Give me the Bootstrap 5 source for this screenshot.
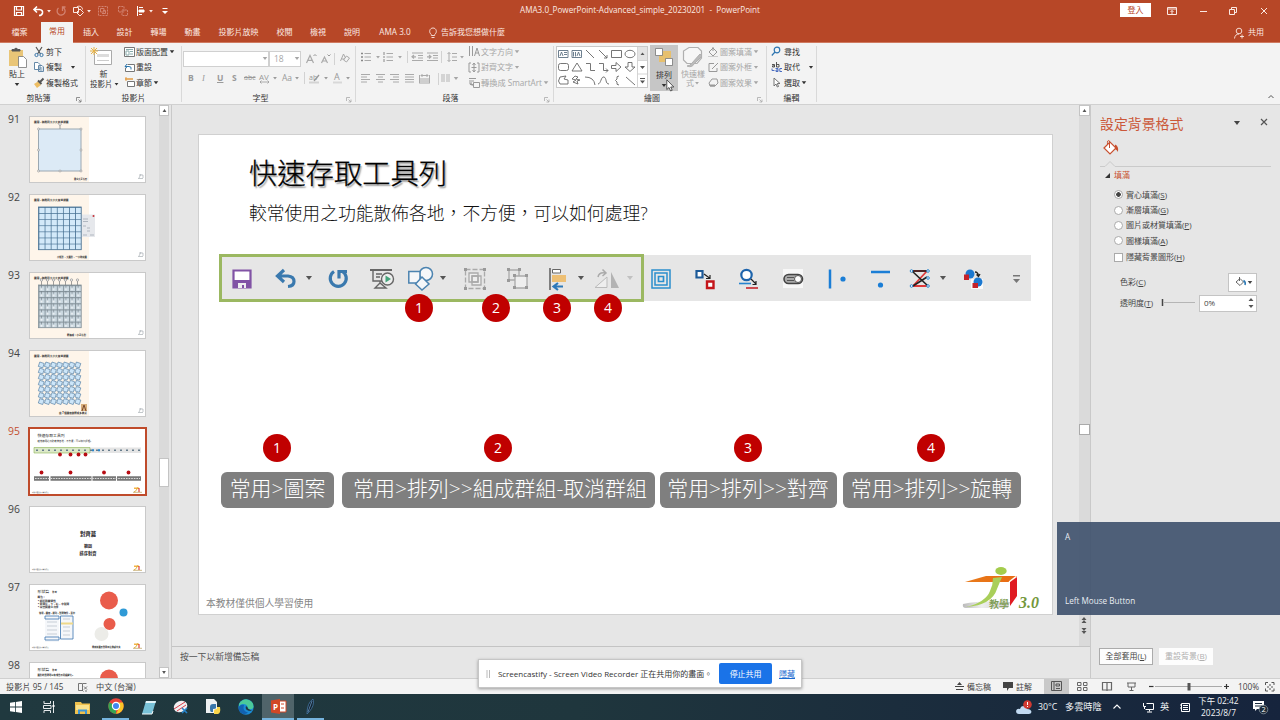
<!DOCTYPE html>
<html lang="zh-TW">
<head>
<meta charset="utf-8">
<title>AMA3.0_PowerPoint-Advanced_simple_20230201 - PowerPoint</title>
<link href="https://cdn.jsdelivr.net/npm/bootstrap@5.3.0/dist/css/bootstrap.min.css" rel="stylesheet">
<script defer src="https://cdn.jsdelivr.net/npm/bootstrap@5.3.0/dist/js/bootstrap.bundle.min.js"></script>
<style>
body{width:1280px;height:720px;overflow:hidden;background:#e6e6e6;font-family:"Open Sans","Noto Sans CJK TC",sans-serif;font-size:8px;line-height:12px;color:#333;white-space:nowrap}
svg{display:block;flex:none;overflow:visible}
svg:not([fill]){fill:none}
.strip{display:grid;align-items:center}
.dd{display:block;flex:none;width:6px;height:3px;background:currentColor;clip-path:polygon(12% 0,88% 0,50% 100%)}
.vline{width:1px;height:12px;background:#d2d2d2}
.dim{color:#a6a6a6}
/* title and tabs */
.topbar{height:43px;background:#b74727;color:#fbe9e3;border-bottom:1px solid #cf7a60}
.titlebar{height:22px}
.qat{grid-template-columns:19px 15px 8px 18px 14px 10px 20px 18px 14px 13px 8px;padding-left:12px;width:300px}
.doc-title{width:680px;text-align:center;font-size:8.15px;line-height:20px}
.wincmd{width:300px;grid-template-columns:46px 31px 30px 31px 14px;padding-left:140px}
.login{width:31px;height:14px;background:#fff;color:#b74727;text-align:center;line-height:13px;margin-bottom:2px}
.tabs{height:20px;grid-template-columns:39px 36px 32px 35px 33px 35px 57px 35px 32px 36px 48px 10px 805px 11px 30px;text-align:center;line-height:18px}
.tabs>div{margin-top:-2px}
.tabs>.tab-on{background:#f3f3f3;color:#b74727;height:21px;width:32px;margin:0 0 0 2px}
.tab-ama{font-size:8.2px;padding-left:2px}
.tell{text-align:left;padding-left:13px}
/* ribbon */
.ribbon{height:62px;background:#f3f3f3;border-bottom:1px solid #d0d0d0;padding-top:3px}
.grp{height:56px;position:relative;border-right:1px solid #d9d9d9}
.grp-body{height:45px}
.grp-name{height:13px;line-height:13px;text-align:center;color:#333}
.launch{position:absolute;right:3px;bottom:-1px}
.g1{width:86px}.g2{width:96px}.g3{width:174px}.g4{width:198px}.g5{width:213px}.g6{width:50px}
.bigb{line-height:10px;text-align:center}
.bigb .lbl{height:10px}
.stack{margin-top:-2px}
.stack>div{height:15.5px;display:flex;align-items:center}
.stack svg{margin-right:1px}
.stack .dd{margin-left:1px}
.paste{width:34px}
.paste svg{margin:2px 0 1px 8px}
.newsl{width:38px}
.newsl svg{margin-left:3px}
.newsl .lbl{padding-right:3px}
.newsl .two{font-size:7.5px;padding-left:4px;gap:1px;line-height:10px}
.combo{height:16px;background:#fff;border:1px solid #d0d0d0;line-height:14px;font-size:8.5px}
.r-font1{grid-template-columns:86px 37px 15px 13px 5px 12px;padding:3px 0 0 1px;height:22px}
.r-font2{grid-template-columns:14px 15px 15px 12px 15px 13px 10px 12px 10px 5px 14px 10px 12px 6px;padding-left:6px;height:20px;font-size:8.5px;color:#9a9a9a}
.r-p1{grid-template-columns:14px 8px 14px 10px 4px 15px 15px 6px 12px 6px;padding:0 0 0 5px;height:22px;width:116px}
.r-p2{grid-template-columns:14.5px 14.5px 14.5px 14.5px 15px 7px 12px 6px;padding-left:5px;height:21px}
.gallery{width:92px;height:42px;background:#fff;border:1px solid #c8c8c8;margin:0 2px 0 2px}
.arrbtn{width:28px;height:46px;background:#c6c6c6;margin-top:-1px;position:relative}
.pointer{position:absolute;left:16px;top:34px}
.quick{width:30px}
/* slide list */
.workarea{height:573px}
.slidelist{width:172px;height:573px;overflow:hidden;border-right:1px solid #c9c9c9}
.thumb-row{display:grid;grid-template-columns:30px 116px;height:78px;align-items:start}
.thumb-row b{font-weight:400;font-size:10.4px;padding-left:8px;line-height:5px;color:#444}
.thumb-row svg{outline:1px solid #c9c9c9;background:#fff;overflow:hidden}
.thumb-row.sel b{color:#c34f30}
.thumb-row.sel svg{outline:2px solid #bf4b2b}
.thumbs{padding-top:11.5px;width:159px}
.sbar{width:10px;background:#dadada}
.sbtn{width:10px;height:11px;background:#fff;border:1px solid #c4c4c4;display:flex;align-items:center;justify-content:center;color:#555}
.sbtn .dd{width:5px}
.flip{transform:rotate(180deg)}
.lthumb{height:29px;background:#fff;border:1px solid #c4c4c4;margin-top:342px}
/* editor */
.editor{width:918px}
.stage{height:541px}
.slide{width:855px;height:481px;margin:29px 0 0 26px;background:#fff;border:1px solid #d0d0d0;position:relative}
.s-title{font-size:28.3px;font-weight:300;line-height:38px;margin:19px 0 0 50px;color:#000;text-shadow:1.5px 1.5px 1.5px #999;-webkit-text-stroke:.3px #000}
.s-sub{font-size:17.8px;font-weight:300;line-height:30px;margin:6px 0 0 50px;color:#111}
.s-bar{margin:26px 0 0 20px;height:48px}
.s-green{width:425px;height:48px;border:3px solid #9bb861;background:#e6e6e6;grid-template-columns:44px 31px 21px 44px 38px 31px 24px 43px 40px 31px 18px 31px 8px;padding:2px 0 0 8px}
.s-gray{width:387px;height:46px;background:#e6e6e6;grid-template-columns:44px 43px 45px 44px 43px 40px 31px 22px 51px 8px;padding:2px 0 0 5px}
.s-bar .dd{width:8px;height:4px;color:#555;margin-top:-2px}
.num{width:28px;height:28px;border-radius:50%;background:#c00000;color:#fff;font-size:14px;line-height:27px;text-align:center}
.nums1{grid-template-columns:77px 61px 51px 28px;margin:-8px 0 0 206px;position:relative}
.nums2{grid-template-columns:221px 250px 183px 28px;margin:112px 0 0 64px}
.paths{margin:10px 0 0 22px;height:36px;grid-template-columns:121px 317.5px 183px 178px}
.path-box{height:36px;border-radius:6px;background:#7f7f7f;color:#fff;font-size:20.95px;font-weight:300;line-height:33px;text-align:center}
.p1{width:113px}.p2{width:313px;padding-left:3px}.p3{width:177px}.p4{width:178px}
.s-foot{font-size:9.75px;color:#858585;line-height:14px;margin:89px 0 0 7px}
.s-logo{position:absolute;right:10px;bottom:-3px}
.edbar{width:11px}
.edthumb{height:11px;background:#fff;border:1px solid #aaa;margin:308px 0 179px}
.notes{height:32px;border-top:1px solid #c4c4c4;padding:3px 0 0 8px;font-size:8.8px;line-height:14px;color:#555}
/* format pane */
.pane{width:190px;border-left:1px solid #c9c9c9;padding-left:9px;color:#444}
.pane-head{height:34px;grid-template-columns:133px 27px 10px}
.pane-head h2{font-size:13.9px;line-height:34px;margin:0;font-weight:400;color:#cb5839;padding-top:2px}
.opts{padding:6px 0 0 14px}
.opts>div{height:15.4px;display:flex;align-items:center}
.opts>div:last-child{margin-top:1px}
.opts i{width:9px;height:9px;border:1px solid #aaa;background:#fff;border-radius:50%;margin-right:3px;display:block}
.opts i.on{background:radial-gradient(#444 0 2px,#fff 2.6px)}
.opts i.sq{border-radius:0}
.sect{color:#c8502f;margin:1px 0 0 5px;gap:4px;height:12px}
.colr{padding:8px 23px 0 20px}
.colr.low{padding-top:0;margin-top:3px}
.fillbtn{width:29px;height:19px;background:#fff;border:1px solid #c4c4c4;padding:0 3px 0 6px}
.spin{width:58px;height:17px;background:#fff;border:1px solid #c4c4c4;padding:0 2px 0 4px}
.pbtns{margin:336px 0 0 -1px;gap:6px}
.pbtn{width:54px;height:17px;background:#fdfdfd;border:1px solid #ababab;text-align:center;line-height:14px}
.pbtn.off{border-color:#fdfdfd;color:#b0b0b0}
.keys{position:absolute;left:1057px;top:522px;width:223px;height:93px;background:rgba(61,80,108,.9);color:#e9edf2;padding:9px 8px 8px;font-size:8.15px}
/* bottom */
.status{height:16px;background:#f3f3f3;border-top:1px solid #cfcfcf;padding-left:6px;color:#444}
.st-l{grid-template-columns:68px 22px 60px;width:949px;line-height:13px}
.st-r{grid-template-columns:12px 36px 13px 28px 33px 25px 25px 22px 6px 69px 12px 29px 12px;width:325px;line-height:13px}
.viewon{width:25px;height:15px;background:#c9c9c9;padding:2px 0 0 7px}
.pct{font-size:8.3px;padding-left:2px}
.task{height:26px;background:linear-gradient(90deg,#20393f 0,#1f363d 45%,#1b2d3d 70%,#16243d 100%);color:#f2f4f6}
.apps{grid-template-columns:32px 34px 33px 33px 33px 32px 32px 33px 32px 32px;width:1016px;justify-items:center}
.apps>div{height:26px;width:32px;display:flex;align-items:center;justify-content:center}
.apps .run{border-bottom:2px solid #76b4de;width:27px}
.apps .cur{background:#50646a;width:32px}
.tray{grid-template-columns:22px 27px 47px 31px 17px 20px 17px 43px 29px 8px;font-size:9.2px;width:264px}
.clock{font-size:8.4px;text-align:center;line-height:12px}
.share{position:absolute;left:478px;top:659px;width:324px;height:29px;background:#fff;border:1px solid #c6c6c6;box-shadow:0 1px 3px #999;padding:0 6px 0 7px;font-size:8px}
.share .btn{width:53px;height:21px;padding:0;font-size:8px;line-height:20px;background:#1a73e8;border:0;border-radius:2px}
.share a{color:#1a6bd0;font-size:8px}
</style>
</head>
<body>
<svg width="0" height="0" class="position-absolute">
<defs>
<pattern id="cells" width="6.1" height="6.1" patternUnits="userSpaceOnUse" x="8.5" y="12"><rect width="6.1" height="6.1" fill="#d3e9f9"/><path d="M0 0H6.1M0 0V6.1" stroke="#456f92" stroke-width="1.5"/></pattern>
<pattern id="picked" width="6.1" height="6.1" patternUnits="userSpaceOnUse" x="8.500" y="12"><rect width="6.1" height="6.1" fill="#ccd9e1"/><path d="M0 .5H6.100M.5 0V6.100" stroke="#84929a"/><path d="M3 0V3" stroke="#6f7c84" stroke-width=".6"/><circle cx="3" cy="4.200" r="1" fill="#eef2f4"/></pattern>
<g id="turned" fill="#cde6f9" stroke="#41719a" stroke-width=".6"><path id="tq" d="M1.800 0L6.200 1.500L4.700 5.900L.3 4.400Z"/><use href="#tq" x="6.100"/><use href="#tq" x="12.200"/><use href="#tq" x="18.300"/><use href="#tq" x="24.400"/><use href="#tq" x="30.500"/><use href="#tq" x="36.600"/></g>
<g id="tinylogo"><path d="M1 1H5V4M0 4.500H5M3 0L1 4" stroke="#9aa2a7" stroke-width=".6"/></g>
<g id="gold"><path d="M1 1.200H6" stroke="#f0a018" stroke-width="1.200"/><path d="M6 1V5" stroke="#d91c18"/><path d="M4.500 .3Q4 4 1 5" stroke="#e2b23e"/><path d="M0 5.300H9" stroke="#b99a50" stroke-width=".7"/></g>
<g id="flower"><path d="M0 0H59V66H0Z" fill="#fef5ea"/><text x="4" y="6" font-size="2.700" font-weight="700" fill="#222">圖案 - 使用同大小大量並排圖</text></g>
</defs>
</svg>

<header class="topbar">
 <div class="titlebar d-flex">
  <div class="qat strip">
   <svg width="14" height="14" stroke="#fff" stroke-width="1.2"><path d="M2.500 2.500H11.500V11.500H2.500ZM4.500 2.500V6H9.500V2.500M4.500 11V8.500H9.500V11"/></svg>
   <svg width="14" height="14" stroke="#fff" stroke-width="1.600"><path d="M6 2.500L3 5.500L6 8.500M3.400 5.500H8.500Q12 6 11.500 9Q11 11.500 8 11.500"/></svg>
   <i class="dd"></i>
   <svg width="14" height="14" stroke="#d28270" stroke-width="1.300"><path d="M4.500 4A4 4 0 1 0 9 3.500M8.500 7V3H11.500"/></svg>
   <svg width="14" height="14" stroke="#fbe9e3"><path d="M1.500 3.500H6.500V8.500H1.500ZM4.500 3.500C5 1.500 10.500 1.500 10.500 5.500M8 5L11.500 8.500L8 12L4.500 8.500Z"/></svg>
   <i class="dd"></i>
   <svg width="14" height="14" stroke="#d28270"><path d="M2.500 2.500H11.500V11.500H2.500Z" stroke-dasharray="2 1"/><path d="M4.500 4.500H8V8H4.500ZM7 6.500H9.500V9.500H6"/></svg>
   <svg width="14" height="14" stroke="#d28270"><path d="M2.500 2.500H8V8H2.500ZM6 6H11.500V11.500H6Z" stroke-dasharray="2 .8"/></svg>
   <svg width="14" height="14" stroke="#fff"><path d="M3.500 2V12M5 3.500H9"/><path d="M5 6H10V8H5Z" fill="#fff"/><path d="M5 10.500H8"/></svg>
   <i class="dd"></i>
   <svg width="8" height="8" fill="#fff"><path d="M1.500 1H6.500V2H1.500ZM1 4H7L4 7Z"/></svg>
  </div>
  <div class="doc-title">AMA3.0_PowerPoint-Advanced_simple_20230201&nbsp; -&nbsp; PowerPoint</div>
  <div class="wincmd strip">
   <div class="login">登入</div>
   <svg width="12" height="10" stroke="#fbe9e3"><path d="M1.500 1.500H10.500V8.500H1.500ZM1.500 3H10.500M6 8V4.500M4.500 6L6 4.500L7.500 6"/></svg>
   <svg width="12" height="10" stroke="#fbe9e3"><path d="M3 5.500H10"/></svg>
   <svg width="12" height="10" stroke="#fbe9e3"><path d="M2.500 3.500H7.500V8.500H2.500ZM4.500 3.500V1.500H9.500V6.500H7.500"/></svg>
   <svg width="12" height="10" stroke="#fbe9e3"><path d="M3 2L9 8M9 2L3 8"/></svg>
  </div>
 </div>
 <nav class="tabs strip">
  <div>檔案</div><div class="tab-on">常用</div><div>插入</div><div>設計</div><div>轉場</div><div>動畫</div><div>投影片放映</div><div>校閱</div><div>檢視</div><div>說明</div><div class="tab-ama">AMA 3.0</div>
  <svg class="ms-2" width="10" height="12" stroke="#fbe9e3" stroke-width=".9"><path d="M5.300 8.500V7.500C2.500 5.500 3.500 1 7 1S11.500 5.500 8.700 7.500V8.500ZM5.500 10.500H8.500"/></svg>
  <div class="tell">告訴我您想做什麼</div>
  <svg width="12" height="12" stroke="#fbe9e3" stroke-width=".9"><circle cx="6" cy="4" r="2.800"/><path d="M1.500 11.500Q2 7 6 7M7 9.500H11M9 7.500V11.500"/></svg>
  <div class="text-start ps-1">共用</div>
 </nav>
</header>

<section class="ribbon d-flex">
 <div class="grp g1">
  <div class="grp-body d-flex">
   <div class="paste bigb">
    <svg width="20" height="20"><path d="M1 2H15V18H1Z" fill="#e9c577"/><path d="M4 3H12V1.500H10L8 0L6 1.500H4Z" fill="#555" stroke="#555"/><path d="M10.500 8.500H15.500L18.500 11.500V19.500H10.500Z" fill="#fff" stroke="#777" stroke-width=".8"/></svg>
    <div class="lbl">貼上</div><i class="dd mx-auto mt-1"></i>
   </div>
   <div class="stack">
    <div><svg width="11" height="12"><path d="M2 1L6.500 8M8 1L3.500 8" stroke="#555" stroke-width="1.200"/><circle cx="2.500" cy="9" r="1.600" stroke="#3a75a8"/><circle cx="7.500" cy="9" r="1.600" stroke="#3a75a8"/></svg>剪下</div>
    <div><svg width="11" height="12" stroke="#6589a8" fill="#fff"><path d="M.5 1.500H4L6 3.500V8.500H.5ZM4.500 4.500H8L9.500 6V10.500H4.500Z"/><path d="M5.500 7H8.500M5.500 9H8.500"/></svg>複製<i class="dd ms-2"></i></div>
    <div><svg width="11" height="12"><path d="M0 7L4 4.500L7 8L3 11Z" fill="#edbd62"/><path d="M4 3.500L7.500 7M6 5L9.500 1.500" stroke="#555" stroke-width="2"/></svg>複製格式</div>
   </div>
  </div>
  <div class="grp-name pe-2">剪貼簿</div>
  <svg class="launch" width="6" height="6" stroke="#777" stroke-width=".8"><path d="M.5 4V.5H4M2.500 2.500L5 5M5 2.500V5H2.500"/></svg>
 </div>
 <div class="grp g2">
  <div class="grp-body d-flex">
   <div class="newsl bigb">
    <svg width="24" height="23"><path d="M5.500 4.500H22.500V18.500H5.500Z" fill="#fff" stroke="#aaa"/><path d="M8 8H20V11H8Z" fill="#dcdcdc"/><path d="M8 14.500H20" stroke="#ccc"/><path d="M5 1V9M1 5H9M2 2L8 8M8 2L2 8" stroke="#e8b346"/></svg>
    <div class="lbl">新</div><div class="d-flex align-items-center two">投影片<i class="dd"></i></div>
   </div>
   <div class="stack">
    <div><svg width="11" height="10" stroke="#777" fill="#fff"><path d="M.5 .5H10.500V9.500H.5Z"/><path d="M2 2.500H9M2 4V8H5V4ZM6 4.500H9M6 7H9" stroke="#8aa"/></svg>版面配置<i class="dd"></i></div>
    <div><svg width="11" height="11" stroke="#777"><path d="M3.500 2.500H10.500V9.500H1.500V6" fill="#fff"/><path d="M1 4.500H5Q8 4.500 7 7.500M3 2L1 4.500L3 6" stroke="#2e77ad"/></svg>重設</div>
    <div><svg width="11" height="11"><path d="M1 2H9" stroke="#e39b42" stroke-width="1.500"/><path d="M3.500 4.500H10.500V9.500H3.500Z" fill="#fff" stroke="#777"/><path d="M2 0V4" stroke="#e39b42"/></svg>章節<i class="dd"></i></div>
   </div>
  </div>
  <div class="grp-name">投影片</div>
 </div>
 <div class="grp g3 dim">
  <div class="grp-body">
   <div class="r-font1 strip">
    <div class="combo d-flex align-items-center justify-content-end pe-0"><i class="dd"></i></div>
    <div class="combo d-flex align-items-center justify-content-between ps-1" style="width:32px">18<i class="dd"></i></div>
    <svg width="11" height="11"><path d="M.5 10L4 2.500L7.500 10M1.800 7.300H6.200" stroke="#aaa" stroke-width="1.200"/><path d="M7.500 3L9 1.500L10.500 3" stroke="#999"/></svg>
    <svg width="9" height="11"><path d="M.5 10L3.500 4L6.500 10M1.500 8H5.500" stroke="#aaa" stroke-width="1.200"/><path d="M6.500 1.500L8 3L9.500 1.500" stroke="#999"/></svg>
    <span class="vline"></span>
    <svg width="12" height="12" stroke="#aaa"><path d="M1.500 8L4.500 1L6.500 5M2.500 6H5.500M4.500 7L7.500 3L10.500 5L7.500 9Z"/></svg>
   </div>
   <div class="r-font2 strip">
    <b>B</b><i style="font-family:'Liberation Serif'">I</i><u><b>U</b></u><b>S</b><s style="font-size:7px">abc</s>
    <svg width="11" height="11"><text x="0" y="6.500" font-size="8" fill="#999">AV</text><path d="M1 9H10M2.500 7.500L1 9L2.500 10.500M8.500 7.500L10 9L8.500 10.500" stroke="#999" stroke-width=".8"/></svg>
    <i class="dd"></i><span>Aa</span><i class="dd"></i><span class="vline"></span>
    <svg width="11" height="11"><text x="0" y="6.500" font-size="7" fill="#999">ab</text><path d="M5 8L10 2" stroke="#999" stroke-width="1.300"/><path d="M0 9.500H10" stroke="#d3d3d3" stroke-width="2"/></svg>
    <i class="dd"></i>
    <svg width="10" height="11"><text x="1" y="7" font-size="9" fill="#999">A</text><path d="M0 9.500H9" stroke="#d8d8d8" stroke-width="2"/></svg>
    <i class="dd"></i>
   </div>
  </div>
  <div class="grp-name pe-3">字型</div>
  <svg class="launch" width="6" height="6" stroke="#aaa" stroke-width=".8"><path d="M.5 4V.5H4M2.500 2.500L5 5M5 2.500V5H2.500"/></svg>
 </div>
 <div class="grp g4 dim">
  <div class="grp-body d-flex">
   <div>
    <div class="r-p1 strip">
     <svg width="10" height="10" stroke="#aaa"><path d="M3.500 1.500H10M3.500 5H10M3.500 8.500H10"/><path d="M0 1.500H2M0 5H2M0 8.500H2" stroke="#888" stroke-width="1.600"/></svg><i class="dd"></i>
     <svg width="10" height="10" stroke="#aaa"><path d="M3.500 1.500H10M3.500 5H10M3.500 8.500H10"/><path d="M1 0V3M1 4V6M1 7V10" stroke="#888"/></svg><i class="dd"></i><span class="vline"></span>
     <svg width="12" height="10" stroke="#aaa"><path d="M1 1H12M7 3.500H12M7 6H12M1 8.500H12M5 4.800H1M3 3L1 4.800L3 6.500" stroke-width="1.200"/></svg>
     <svg width="12" height="10" stroke="#aaa"><path d="M1 1H12M7 3.500H12M7 6H12M1 8.500H12M1 4.800H5M3 3L5 4.800L3 6.500" stroke-width="1.200"/></svg><span class="vline"></span>
     <svg width="10" height="10" stroke="#aaa"><path d="M5 1.500H10M5 5H10M5 8.500H10M2 .5V9.500M.5 2L2 .5L3.500 2M.5 8L2 9.500L3.500 8"/></svg><i class="dd"></i>
    </div>
    <div class="r-p2 strip">
     <svg width="10" height="9" stroke="#aaa"><path d="M0 .5H9M0 3H6M0 5.500H9M0 8H6"/></svg>
     <svg width="10" height="9" stroke="#aaa"><path d="M0 .5H9M2 3H7M0 5.500H9M2 8H7"/></svg>
     <svg width="10" height="9" stroke="#aaa"><path d="M0 .5H9M3 3H9M0 5.500H9M3 8H9"/></svg>
     <svg width="10" height="9" stroke="#aaa"><path d="M0 .5H9M0 3H9M0 5.500H9M0 8H9"/></svg>
     <svg width="11" height="11" stroke="#aaa"><path d="M.5 2V10.500M10.500 2V10.500M1 6H10M1 8H10M1 10H10M2 2.500H9M3.500 1L2 2.500L3.500 4M7.500 1L9 2.500L7.500 4"/></svg>
     <span class="vline ms-1"></span>
     <svg width="9" height="9" stroke="#b5b5b5"><path d="M0 1H4M0 3H4M0 5H4M0 7H4M5 1H9M5 3H9M5 5H9M5 7H9"/></svg><i class="dd"></i>
    </div>
   </div>
   <div class="stack" style="margin-left:-4px">
    <div><svg width="12" height="11" stroke="#999"><path d="M1.500 0V10M4.500 0V10"/><path d="M6.500 10L9 2L11.500 10M7.500 7H10.500"/></svg>文字方向<i class="dd"></i></div>
    <div><svg width="12" height="11" stroke="#999"><path d="M3 1H1V10H3M9 1H11V10H9M6 1V10M4.500 3L6 1L7.500 3M4.500 8L6 10L7.500 8M3.500 5.500H8.500"/></svg>對齊文字<i class="dd"></i></div>
    <div style="font-size:8.2px"><svg width="12" height="11" stroke="#999"><path d="M1 1.500H8M1 4H6M1 6H4M5.500 5.500H11.500V10.500H5.500Z"/><path d="M2 7L5 8" stroke-width="1.500"/></svg>轉換成 SmartArt<i class="dd"></i></div>
   </div>
  </div>
  <div class="grp-name pe-2">段落</div>
  <svg class="launch" width="6" height="6" stroke="#aaa" stroke-width=".8"><path d="M.5 4V.5H4M2.500 2.500L5 5M5 2.500V5H2.500"/></svg>
 </div>
 <div class="grp g5">
  <div class="grp-body d-flex">
   <div class="gallery">
    <svg width="90" height="40" stroke="#666" stroke-width=".9">
     <path d="M1.500 3.500H11V10.500H1.500ZM7 5.500H10M7 7.500H10M3 9L4.500 5L6 9M15 3.500H24.500V10.500H15ZM16.500 5V9.500M18.500 5V9.500M20 9L21.500 5L23 9" stroke="#5d7283"/>
     <path d="M29 3L37 11M42 3L50 11M50 8V11H47M54.500 3.500H64.500V10.500H54.500Z"/><ellipse cx="73" cy="7" rx="5" ry="3.700"/>
     <rect x="1.500" y="16.500" width="10" height="7" rx="2"/><path d="M20 16L25 24H15ZM29 16.500H33.500V23.500H38M42 16.500H46.500V23.500H51M49 21.500L51 23.500L49 25.500M54.500 18.500H59V15.500L64 20L59 24.500V21.500H54.500ZM71 15.500H75V20H78L73 24.500L68 20H71Z"/>
     <path d="M3 37H11L11 33L7 32L9 29L3 30L1.500 34ZM18 29L15 32L19 33L16 35L21 37L20 34L23 33L19 32L21 30ZM28 30Q37 30 38 38M41 37C44 37 44 29 47 30S48 37 52 37M62 29Q59 29 60 32L58.500 33.500L60 35Q59 38 62 38M69 30L78 38"/>
     <path d="M80.500 0V40M80.500 13.500H90M80.500 27H90" stroke="#d0d0d0"/><rect x="81" y="0" width="9" height="13" fill="#e3e3e3" stroke="none"/>
     <path d="M83.500 8L85.500 5.500L87.500 8ZM83 19H88L85.500 22ZM83 33.500H88L85.500 36.500ZM83 31H88V32H83Z" fill="#555" stroke="none"/>
    </svg>
   </div>
   <div class="arrbtn bigb">
    <svg width="20" height="20" class="ms-1" style="margin-bottom:5px"><path d="M5 8H14V17H5ZM9 6H17V13H9Z" fill="#e7c06e"/><path d="M1.500 3.500H8.500V10.500H1.500ZM11.500 13.500H18.500V20.500H11.500Z" fill="#fff" stroke="#777" stroke-width=".8"/></svg>
    <div class="lbl">排列</div><i class="dd mx-auto mt-1"></i>
    <svg class="pointer" width="9" height="13"><path d="M.8 .8V10.500L3 8.500L4.600 12L6.200 11.300L4.700 8H7.800Z" fill="#fff" stroke="#333" stroke-width=".8"/></svg>
   </div>
   <div class="quick bigb dim">
    <svg width="22" height="23" class="ms-1" stroke="#b0b0b0"><path d="M7 1.500H16L19.500 5V12L15 17.500H5L1.500 14V5Z" stroke-width="1.200" fill="#f7f7f7"/><path d="M18 8L10 17Q8 20 5 20Q10 22 12 18L20 10Z" fill="#bbb"/></svg>
    <div class="lbl">快速樣</div><div class="d-flex justify-content-center align-items-center lh-1">式<i class="dd"></i></div>
   </div>
   <div class="stack dim">
    <div><svg width="11" height="11" stroke="#999"><path d="M1 6L5 2L9 6L5 10ZM5 5V1"/><path d="M0 10.500H10" stroke="#ccc"/></svg>圖案填滿<i class="dd"></i></div>
    <div><svg width="11" height="11" stroke="#999"><path d="M9 6V9.500H1V1.500H6M4 7L10 1"/></svg>圖案外框<i class="dd"></i></div>
    <div><svg width="11" height="11" stroke="#999"><path d="M4 2H9L10 6L7 9H2L1 6Z"/><path d="M2 8.500H7" stroke-width="2"/></svg>圖案效果<i class="dd"></i></div>
   </div>
  </div>
  <div class="grp-name pe-3">繪圖</div>
  <svg class="launch" width="6" height="6" stroke="#aaa" stroke-width=".8"><path d="M.5 4V.5H4M2.500 2.500L5 5M5 2.500V5H2.500"/></svg>
 </div>
 <div class="grp g6">
  <div class="grp-body d-flex">
   <div class="stack ps-1">
    <div><svg width="12" height="11" stroke="#2e75b0" stroke-width="1.200"><circle cx="6" cy="4" r="2.800"/><path d="M4 6L.8 9.500"/></svg>尋找</div>
    <div><svg width="12" height="11" stroke="#444" stroke-width=".9"><path d="M1 2.500H3.500V5H1.500V3.800H3.500M5.500 0V5H8V2.500H5.500"/><path d="M4.500 6.500H7V9.500H5V8H7M11 6.500H8.800V9.500H11M1 6.500V8.500H3.500" stroke="#3a60bb"/></svg>取代<i class="dd ms-2"></i></div>
    <div><svg width="12" height="11" stroke="#666" stroke-width=".9"><path d="M3 1V9L5 7L6.300 10L7.500 9.500L6.300 6.500H9Z" fill="#fff"/></svg>選取<i class="dd"></i></div>
   </div>
  </div>
  <div class="grp-name">編輯</div>
 </div>
 <svg class="ms-auto align-self-end me-1 mb-1" width="9" height="6" stroke="#555"><path d="M1.500 4L4 1.500L6.500 4"/></svg>
</section>

<main class="workarea d-flex">
 <aside class="slidelist d-flex">
  <div class="thumbs">
   <div class="thumb-row"><b>91</b><svg width="115" height="65"><use href="#flower"/><path d="M8.500 12H51V54H8.500Z" fill="#dceaf6" stroke="#9ba8b2"/><path d="M30 12V7" stroke="#888" stroke-width=".8"/><g fill="#fff" stroke="#888" stroke-width=".6"><circle cx="30" cy="7" r="1.300"/><circle cx="8.500" cy="12" r="1"/><circle cx="51" cy="12" r="1"/><circle cx="8.500" cy="54" r="1"/><circle cx="51" cy="54" r="1"/><circle cx="30" cy="54" r="1"/><circle cx="8.500" cy="33" r="1"/><circle cx="51" cy="33" r="1"/></g><text x="44" y="62.500" font-size="2.200" fill="#222" font-weight="700">建立大正方形</text><use href="#tinylogo" x="108" y="57"/></svg></div>
   <div class="thumb-row"><b>92</b><svg width="115" height="65"><use href="#flower"/><rect x="8.500" y="12" width="42.700" height="42.700" fill="url(#cells)" stroke="#456f92" stroke-width=".8"/><path d="M52 19.500H65V42H52Z" fill="#e6e8ec"/><circle cx="63.500" cy="21" r="1" fill="#c8333a"/><path d="M53 24H58M53 26.500H58M53 31H56M57 33H60M57 36H60M53 40H57M60 40H64" stroke="#a2aab5" stroke-width=".8"/><text x="27" y="62.500" font-size="2.300" fill="#222" font-weight="700">小矩形、大圖形、一小時完圖</text><use href="#tinylogo" x="108" y="57"/></svg></div>
   <div class="thumb-row"><b>93</b><svg width="115" height="65"><use href="#flower"/><rect x="8.500" y="12" width="42.700" height="42.700" fill="url(#picked)" stroke="#84929a" stroke-width=".8"/><path d="M11.500 12V7.500M17.500 12V7.500M23.500 12V7.500M29.500 12V7.500M35.500 12V7.500M41.500 12V7.500M47.500 12V7.500" stroke="#888" stroke-width=".8"/><g fill="#eee" stroke="#888" stroke-width=".6"><circle cx="11.500" cy="7" r="1.200"/><circle cx="17.500" cy="7" r="1.200"/><circle cx="23.500" cy="7" r="1.200"/><circle cx="29.500" cy="7" r="1.200"/><circle cx="35.500" cy="7" r="1.200"/><circle cx="41.500" cy="7" r="1.200"/><circle cx="47.500" cy="7" r="1.200"/></g><text x="37" y="62.500" font-size="2.400" fill="#222" font-weight="700">轉換成：小正方形</text><use href="#tinylogo" x="108" y="57"/></svg></div>
   <div class="thumb-row"><b>94</b><svg width="115" height="65"><use href="#flower"/><use href="#turned" x="8" y="11"/><use href="#turned" x="8" y="17.100"/><use href="#turned" x="8" y="23.200"/><use href="#turned" x="8" y="29.300"/><use href="#turned" x="8" y="35.400"/><use href="#turned" x="8" y="41.500"/><use href="#turned" x="8" y="47.600"/><path d="M51 53H57V60H51Z" fill="#d8ae7a"/><path d="M52 60L54 54L56 60" stroke="#7a4a30"/><text x="29" y="62.500" font-size="2.500" fill="#222" font-weight="700">由 7 個圖案旋轉成多樣式</text><use href="#tinylogo" x="108" y="57"/></svg></div>
   <div class="thumb-row sel"><b>95</b><svg width="115" height="65"><text x="7.500" y="8" font-size="3.900" fill="#222">快速存取工具列</text><text x="7.500" y="12.800" font-size="2.400" fill="#222">較常使用之功能散佈各地，不方便，可以如何處理?</text><path d="M4 18.500H111V24H4Z" fill="#e4e4e4"/><path d="M4 18.500H60V24H4Z" fill="#dbe8c8" stroke="#8fb755" stroke-width=".6"/><path d="M6 21.300H110" stroke="#667c8c" stroke-width="1.400" stroke-dasharray="2 4"/><path d="M62 21.300H64M68 21.300H70" stroke="#2a86c8" stroke-width="2"/><g fill="#b80d14"><circle cx="30" cy="25.500" r="1.900"/><circle cx="40.500" cy="25.500" r="1.900"/><circle cx="48.500" cy="25.500" r="1.900"/><circle cx="55.500" cy="25.500" r="1.900"/><circle cx="11.500" cy="43.500" r="1.900"/><circle cx="40.500" cy="43.500" r="1.900"/><circle cx="74" cy="43.500" r="1.900"/><circle cx="98.500" cy="43.500" r="1.900"/></g><path d="M4 49.500H19M20.500 49.500H61.500M62.500 49.500H86M87 49.500H111" stroke="#777" stroke-width="4.500"/><path d="M5 49.500H110" stroke="#ddd" stroke-width="1.200" stroke-dasharray="1.600 1"/><text x="2" y="64" font-size="1.500" fill="#444">本教材僅供個人學習使用</text><use href="#gold" x="103" y="58"/></svg></div>
   <div class="thumb-row"><b>96</b><svg width="115" height="65"><text x="58" y="28.500" font-size="5.400" font-weight="700" fill="#222" text-anchor="middle">對齊篇</text><text x="58" y="40.500" font-size="4" font-weight="700" fill="#222" text-anchor="middle">範圍</text><text x="58" y="47.500" font-size="4.200" font-weight="700" fill="#222" text-anchor="middle">排序對齊</text><text x="2" y="63" font-size="1.500" fill="#444">本教材僅供個人學習使用</text><use href="#gold" x="103" y="58"/></svg></div>
   <div class="thumb-row"><b>97</b><svg width="115" height="65"><text x="7.500" y="7.500" font-size="3.900" fill="#222">形狀篇</text><text x="22" y="7.500" font-size="2.600" fill="#222">參考</text><text font-size="2.700" fill="#222" font-weight="700"><tspan x="7.500" y="13">概念：</tspan><tspan x="8" y="16.500">• 相近與關係性</tspan><tspan x="8" y="19.500">• 對齊左、下、右、中對齊</tspan><tspan x="8" y="22.500">• 以空間建立次序</tspan></text><text x="9" y="28.500" font-size="2.300" fill="#222" font-weight="700">常用 / 圖案 / 排列 / 對齊物件 / 置中</text><path d="M15 31H29V57H15ZM30.500 31H43V54H30.500Z" fill="#f5f7fa"/><path d="M15 31H29V34H15ZM15 52H29V55H15ZM30.500 31H43V54H30.500Z" stroke="#3a75b0" stroke-width=".8"/><path d="M31 38.500H43" stroke="#eed98a" stroke-width="2"/><path d="M17 37H27M17 41H27M17 45H27M17 49H27M33 34H40M33 42H40M33 46H40M33 50H40" stroke="#b5bcc5" stroke-width=".7"/><circle cx="79" cy="15.500" r="9" fill="#e95c4b"/><circle cx="93.500" cy="27.500" r="4" fill="#2f9ad6"/><circle cx="79.500" cy="39" r="6" fill="#e95c4b"/><circle cx="71.500" cy="49" r="7" fill="#ecece8"/><text x="62" y="63" font-size="2.200" fill="#222" font-weight="700">將所有圖形對齊到左側或中央</text><text x="2" y="63" font-size="1.500" fill="#444">本教材僅供個人學習使用</text><use href="#gold" x="103" y="58"/></svg></div>
   <div class="thumb-row"><b>98</b><svg width="115" height="65"><text x="7.500" y="7.500" font-size="3.900" fill="#222">形狀篇</text><text x="22" y="7.500" font-size="2.600" fill="#222">參考</text><text x="7.500" y="12.500" font-size="2.300" fill="#222" font-weight="700">圖形的對齊可以有哪些不同種變化?</text><circle cx="79" cy="15.500" r="9" fill="#e95c4b"/></svg></div>
  </div>
  <div class="sbar d-flex flex-column">
   <div class="sbtn"><i class="dd flip"></i></div>
   <div class="lthumb"></div>
   <div class="sbtn mt-auto"><i class="dd"></i></div>
  </div>
 </aside>
 <section class="editor">
  <div class="stage d-flex justify-content-between">
   <article class="slide">
    <h1 class="s-title">快速存取工具列</h1>
    <p class="s-sub mb-0">較常使用之功能散佈各地，不方便，可以如何處理?</p>
    <div class="s-bar d-flex align-items-center">
     <div class="s-green strip">
      <svg width="24" height="24"><path d="M3.500 3.500H20.500V20.500H3.500Z" fill="#fff" stroke="#8153a5" stroke-width="2.200"/><path d="M4 13H20V21H4Z" fill="#8153a5"/><path d="M8 16H16V21H14V18H12V21H8Z" fill="#eee"/></svg>
      <svg width="24" height="24" stroke="#3a79ae" stroke-width="3.200"><path d="M10 3L3.500 9L10 15M4 9H14Q20 9.500 20 14.500Q20 19 14 19.500"/></svg>
      <i class="dd"></i>
      <svg width="24" height="24" stroke="#3a79ae" stroke-width="3.200"><path d="M8 4.500A8 8 0 1 0 16.500 4.500M13 11.500V4.500H21"/></svg>
      <svg width="25" height="24" stroke="#666" stroke-width="1.400"><path d="M0 3H22" stroke-width="2"/><path d="M3 3V14H13M6 7H12M6 10H10M10 14V17M10 16L5 21H16Z"/><circle cx="17.500" cy="12" r="6" fill="#eee"/><path d="M15.500 8.500L21 12L15.500 15.500Z" fill="#45a37b" stroke="none"/></svg>
      <svg width="25" height="25" fill="#f5f7f9" stroke="#4b83b0" stroke-width="1.500"><circle cx="18" cy="7" r="6.500"/><path d="M.8 4.500H12V16H.8Z"/><path d="M14 10L21 17L14 23L7.500 17Z"/></svg>
      <i class="dd"></i>
      <svg width="24" height="24" stroke="#aaa" stroke-width="1.300"><path d="M2.500 2.500H21.500V21.500H2.500Z" stroke-dasharray="5 2"/><path d="M6 6H15V15H6ZM9 9H18V18H9Z" fill="#eee"/><path d="M9 9H15V15H9Z"/><path d="M1 1H4V4H1ZM20 1H23V4H20ZM1 20H4V23H1ZM20 20H23V23H20Z" fill="#999" stroke="none"/></svg>
      <svg width="24" height="24" stroke="#aaa" stroke-width="1.300"><path d="M3 3H13V13H3Z"/><path d="M9 9H21V21H9Z" fill="#eee"/><path d="M1 1H4V4H1ZM12 1H15V4H12ZM1 12H4V15H1ZM7 7H10V10H7ZM19 7H22V10H19ZM7 19H10V22H7ZM19 19H22V22H19Z" fill="#999" stroke="none"/></svg>
      <svg width="22" height="24"><path d="M4 1V23" stroke="#666" stroke-width="1.600"/><path d="M6.500 2.500H14.500V6H6.500Z" fill="#fff" stroke="#666"/><path d="M6 8H20V15H6Z" fill="#edbf74"/><path d="M17 19.500H8M12 16L7.500 19.500L12 23" stroke="#2d78b8" stroke-width="2.200"/></svg>
      <i class="dd"></i>
      <svg width="25" height="24"><path d="M0 20.500H12V10Z" fill="#eee" stroke="#bbb"/><path d="M16 5V21H24Z" fill="#b3b3b3"/><path d="M3 10Q4 5 10 6M7.500 2.500L11 6L7.500 9" stroke="#aaa" stroke-width="1.500"/></svg>
      <i class="dd opacity-25"></i>
     </div>
     <div class="s-gray strip">
      <svg width="24" height="24" stroke="#2b8fcd" stroke-width="1.500"><path d="M3 3H21V21H3ZM6 6H18V18H6Z"/><path d="M9.500 9.500H14.500V14.500H9.500Z" stroke-width="1.700"/></svg>
      <svg width="24" height="24"><path d="M3.500 4H9.500V10.500H3.500Z" fill="#fff" stroke="#1d5a98" stroke-width="2.200"/><path d="M14 14.500H20.500V21H14Z" fill="#fff" stroke="#c4151a" stroke-width="2.400"/><path d="M11 7L16.500 11M17 8V11.500H13" stroke="#222" stroke-width="1.200"/></svg>
      <svg width="24" height="24"><circle cx="10.500" cy="8" r="5.200" fill="#fff" stroke="#1d64ac" stroke-width="2.200"/><path d="M3 16.500H15" stroke="#2683ce" stroke-width="1.600"/><path d="M10 21H22" stroke="#c8252b" stroke-width="1.600"/><path d="M15 12L20 17M20 14V17.500H16.500" stroke="#222" stroke-width="1.200"/></svg>
      <svg width="24" height="24"><path d="M2 2H22V21H2Z" fill="#f7f7f7"/><rect x="3" y="7.500" width="18.500" height="9" rx="4.500" fill="#aaa" stroke="#444" stroke-width="1.600"/><circle cx="17" cy="12" r="3.500" fill="#fff" stroke="#555"/><path d="M6 10.500H13M6 13.500H13" stroke="#555"/></svg>
      <svg width="24" height="24"><path d="M5 2.500V21.500" stroke="#1b7ed6" stroke-width="2.500"/><circle cx="18" cy="12" r="2.600" fill="#1b7ed6"/></svg>
      <svg width="24" height="24"><path d="M3 5H22" stroke="#1b7ed6" stroke-width="2.500"/><circle cx="12.500" cy="18" r="2.600" fill="#1b7ed6"/></svg>
      <svg width="24" height="24"><path d="M4 4H19L5 19H20" stroke="#e03a3a" stroke-width="1.800"/><path d="M4 4L20 19M4 4H19M5 19L19 10" stroke="#222" stroke-width="1.600"/><g fill="#fff" stroke="#2b86cc"><circle cx="3.500" cy="4" r="1.300"/><circle cx="20" cy="4" r="1.300"/><circle cx="20" cy="11" r="1.300"/><circle cx="3.500" cy="19" r="1.300"/><circle cx="20" cy="19" r="1.300"/></g></svg>
      <i class="dd"></i>
      <svg width="24" height="24"><path d="M10 12H22V22H10Z" fill="#fafafa"/><circle cx="9" cy="7" r="4.500" fill="#1b78d0"/><path d="M3 7.500H8V13H3Z" fill="#c4222a"/><circle cx="17" cy="15" r="4.500" fill="#1b78d0"/><path d="M11.500 16H17V21H11.500Z" fill="#c4222a"/><path d="M14 5Q17 5 17.500 9M15.500 7.500L17.500 9.500L19 7" stroke="#222" stroke-width="1.300"/></svg>
      <svg width="8" height="8" fill="#777"><path d="M1 0H8V1.500H1ZM1 4H8L4.500 8Z"/></svg>
     </div>
    </div>
    <div class="strip nums1"><div class="num">1</div><div class="num">2</div><div class="num">3</div><div class="num">4</div></div>
    <div class="strip nums2"><div class="num">1</div><div class="num">2</div><div class="num">3</div><div class="num">4</div></div>
    <div class="strip paths"><div class="path-box p1">常用&gt;圖案</div><div class="path-box p2">常用&gt;排列&gt;&gt;組成群組-取消群組</div><div class="path-box p3">常用&gt;排列&gt;&gt;對齊</div><div class="path-box p4">常用&gt;排列&gt;&gt;旋轉</div></div>
    <div class="s-foot">本教材僅供個人學習使用</div>
    <svg class="s-logo" width="80" height="54">
     <defs><linearGradient id="gr"><stop offset="0" stop-color="#bbb"/><stop offset=".4" stop-color="#eee"/><stop offset="1" stop-color="#ccc"/></linearGradient><linearGradient id="or"><stop offset="0" stop-color="#e87b1b"/><stop offset="1" stop-color="#e96a12"/></linearGradient></defs>
     <path d="M1 41Q20 37 48 39L46 45H4Q0 45 1 41Z" fill="url(#gr)"/>
     <path d="M3 19L24 13H55L49 19Z" fill="url(#or)"/><path d="M48 19L55 14V33L48 43Z" fill="#e01b22"/><path d="M47 19L54 13.500" stroke="#fff" stroke-width="1.300"/>
     <ellipse cx="39" cy="8" rx="5.700" ry="3.900" fill="#a4cc4c"/>
     <path d="M31 15L40 14Q37 21 35 26Q30 42 4 44Q24 39 28 28Q31 22 31 15Z" fill="#a9cf5a"/>
     <text x="27" y="44.500" font-size="10" font-weight="500" fill="#7c9c50">教學</text>
     <text x="57" y="45" font-size="17" font-style="italic" font-weight="700" fill="#74983b" style="font-family:'Liberation Serif'" textLength="20" lengthAdjust="spacingAndGlyphs">3.0</text>
    </svg>
   </article>
   <div class="edbar sbar">
    <div class="sbtn w-100"><i class="dd flip"></i></div>
    <div class="edthumb"></div>
    <svg width="10" height="22" fill="#555"><path d="M2.500 6L5 3L7.500 6ZM2.500 9L5 6L7.500 9ZM2.500 14H7.500L5 17ZM2.500 17H7.500L5 20Z"/></svg>
   </div>
  </div>
  <div class="notes">按一下以新增備忘稿</div>
 </section>
 <aside class="pane">
  <div class="pane-head strip"><h2>設定背景格式</h2><i class="dd" style="width:8px;height:4px"></i><svg width="8" height="8" stroke="#555" stroke-width="1.200"><path d="M1 0L7 6M7 0L1 6"/></svg></div>
  <svg width="172" height="29"><path d="M4 9L10 3L16 9L10 15Z" fill="#fff" stroke="#c8502f" stroke-width="1.200"/><path d="M9.500 9V2Q7 0 7.500 6" stroke="#c8502f"/><path d="M15 5.500Q19 7 18 13Q17 11 15 10Z" fill="#c8502f"/><path d="M0 27.500H5L10 22.500L15 27.500H171" stroke="#cacaca"/></svg>
  <div class="sect d-flex align-items-center"><svg width="5" height="5"><path d="M5 0V5H0Z" fill="#333"/></svg>填滿</div>
  <div class="opts">
   <div><i class="on"></i>實心填滿(<u>S</u>)</div><div><i></i>漸層填滿(<u>G</u>)</div><div><i></i>圖片或材質填滿(<u>P</u>)</div><div><i></i>圖樣填滿(<u>A</u>)</div><div><i class="sq"></i>隱藏背景圖形(<u>H</u>)</div>
  </div>
  <div class="colr d-flex align-items-center justify-content-between"><span>色彩(<u>C</u>)</span><div class="fillbtn d-flex align-items-center justify-content-between"><svg width="11" height="10" stroke="#555" stroke-width=".9"><path d="M1 5L5 1.500L8.500 5L5 8.500ZM4.500 4V0"/><path d="M8.500 3.500Q11 5 10 8" stroke="#2a78b5" stroke-width="1.500"/></svg><i class="dd"></i></div></div>
  <div class="colr low d-flex align-items-center justify-content-between"><span style="width:38px">透明度(<u>T</u>)</span><svg width="36" height="8"><path d="M1.500 0V7" stroke="#444" stroke-width="1.500"/><path d="M3 3.500H34" stroke="#b5b5b5"/></svg><div class="spin d-flex align-items-center justify-content-between"><span>0%</span><svg width="6" height="12" fill="#555"><path d="M.5 4L3 1L5.500 4ZM.5 8H5.500L3 11Z"/></svg></div></div>
  <div class="pbtns d-flex"><div class="pbtn">全部套用(<u>L</u>)</div><div class="pbtn off">重設背景(<u>B</u>)</div></div>
 </aside>
</main>

<footer>
 <div class="status d-flex">
  <div class="st-l strip"><span style="font-size:8.2px">投影片 95 / 145</span><svg width="10" height="10" stroke="#666" stroke-width=".9" class="ms-1"><path d="M4.500 9V1.500H.5V8.500H4.500L5.500 9.500M5 1.500H8.500M6 4.500L9 7.500M9 4.500L6 7.500M7 9H9"/></svg><span style="font-size:8.200px">中文 (台灣)</span></div>
  <div class="st-r strip">
   <svg width="9" height="9" fill="#444"><path d="M4.500 0L7 3H2ZM0 4H9V5H0ZM1 7H8V8H1Z"/></svg><span>備忘稿</span>
   <svg width="10" height="9" fill="#444"><path d="M0 0H10V6H6L4 9V6H0Z"/></svg><span>註解</span>
   <div class="viewon"><svg width="11" height="10" stroke="#555"><path d="M.5 .5H10.500V9.500H.5ZM3 .5V9.500M5 3H8.500V5H5ZM5 7.500H9"/></svg></div>
   <svg width="11" height="9" stroke="#666"><path d="M.5 .5H4V3.500H.5ZM6.500 .5H10V3.500H6.500ZM.5 5.500H4V8.500H.5ZM6.500 5.500H10V8.500H6.500Z"/></svg>
   <svg width="11" height="9" stroke="#666"><path d="M.5 .5H5V8H.5ZM5 .5H9.500V8H5ZM5 0V9" stroke-width="1.200"/></svg>
   <svg width="11" height="9" stroke="#666"><path d="M0 1H9M1 1V5H8V1M4.500 5V8M2.500 8.500H6.500"/></svg>
   <svg width="5" height="9" stroke="#333" stroke-width="1.200"><path d="M0 4.500H4.500"/></svg>
   <svg width="68" height="9"><path d="M0 4.500H67" stroke="#aaa"/><path d="M34 1V8.500" stroke="#555" stroke-width="3"/></svg>
   <svg width="6" height="9" stroke="#333" stroke-width="1.200"><path d="M0 4.500H5M2.500 2V7"/></svg>
   <span class="pct">100%</span>
   <svg width="10" height="10" stroke="#555"><path d="M.5 3V.5H3M6.500 .5H9V3M9 6.500V9H6.500M3 9H.5V6.500M5 2V4M5 6V8M2 5H4M6 5H8"/></svg>
  </div>
 </div>
 <div class="task d-flex">
  <div class="apps strip">
   <div><svg width="12" height="12" fill="#fff"><path d="M0 1.800L5 1V5.600H0ZM5.800 .9L12 0V5.600H5.800ZM0 6.400H5V11L0 10.200ZM5.800 6.400H12V12L5.800 11.100Z"/></svg></div>
   <div><svg width="13" height="12" stroke="#e5e9eb"><path d="M1 0V2.500H7.500V0M1 12V9.500H7.500V12M.5 4.500H8V7.500H.5ZM10.500 0V12"/><path d="M9.500 4H11.500V6H9.500Z" fill="#fff" stroke="none"/></svg></div>
   <div><svg width="15" height="13"><path d="M0 1H6L7 2.500H15V13H0Z" fill="#f0c14d"/><path d="M1 4H14V9H1Z" fill="#fbe28b"/><path d="M3 13V8.500H12V13H10V10.500H5V13Z" fill="#3f97d5"/></svg></div>
   <div class="run"><svg width="16" height="16"><circle cx="8" cy="8" r="7.700" fill="#e9433a"/><path d="M1.300 4.200L8 8L8 15.700A7.700 7.700 0 0 1 1.300 4.200Z" fill="#36a552"/><path d="M14.800 4.500H8L11 10L8 15.700A7.700 7.700 0 0 0 14.800 4.500Z" fill="#fbc526"/><circle cx="8" cy="8" r="3.600" fill="#4287ef" stroke="#fff" stroke-width="1.200"/></svg></div>
   <div><svg width="16" height="15"><path d="M5 1H15L11 14H1Z" fill="#78c2d8"/><path d="M5 1H15L14.500 3H4.500Z" fill="#e3f3f8"/><path d="M1 14H11L12 11" stroke="#f3f7f8"/></svg></div>
   <div><svg width="17" height="15"><ellipse cx="7.500" cy="6.500" rx="7" ry="5.500" fill="#f0eef0" transform="rotate(-25 7.500 6.500)"/><path d="M1 9L12 2M4 11L13 5" stroke="#d73f4a"/><path d="M9 8L14 13M14 8L9 13" stroke="#2682c8" stroke-width="1.600"/></svg></div>
   <div><svg width="15" height="16"><path d="M0 0H8L11 3V14H0Z" fill="#eef1f2"/><path d="M4 8Q4 5 7 5H10V9Q10 10 7 10V13H5Q4 13 4 10Z" fill="#3976aa"/><path d="M14 8Q15 14 12 15H8V12Q8 10 11 10V8Z" fill="#f9d54b"/></svg></div>
   <div><svg width="16" height="16"><circle cx="8" cy="8" r="7.700" fill="#1a8ad4"/><path d="M1 5Q4 0 9 .4Q16 2 15.500 8Q15 11 10 10Q10 5 5 5Q2 5 1 8Z" fill="#4ac99a"/><path d="M.5 9Q2 5 6 6Q4 12 10 13.500Q7 16 4 14.500Q1 13 .5 9Z" fill="#1261b0"/><path d="M8 7Q6 12 14 12L10 9.500Q10 8 8 7Z" fill="#20383f"/></svg></div>
   <div class="run cur"><svg width="15" height="15"><path d="M7 2H15V13H7Z" fill="#fff" stroke="#d24726"/><path d="M10 5H13M10 9H13" stroke="#d24726"/><path d="M0 1.500L9 0V15L0 13.500Z" fill="#d24726"/><text x="2" y="10.500" font-size="8" font-weight="700" fill="#fff">P</text></svg></div>
   <div class="run"><svg width="9" height="15"><path d="M7 0Q9 6 3 13L1 15Q1 4 7 0Z" fill="#11202c" stroke="#4779a8" stroke-width=".8"/><path d="M6 2L2 13" stroke="#78a8d4" stroke-width=".7"/></svg></div>
  </div>
  <div class="tray strip">
   <svg width="17" height="15"><path d="M3 14Q0 14 0 11Q1 8 4 9Q5 5 9 6.500Q11 7 11 9Q15 9 15.500 12Q15 14 13 14Z" fill="#c2daf2"/><circle cx="11.500" cy="4.500" r="4.300" fill="#d13a32"/><path d="M11.500 2V5M11.500 6V7" stroke="#fff"/></svg>
   <span style="font-size:8.800px">30°C</span><span>多雲時陰</span>
   <svg width="10" height="8" stroke="#fff" stroke-width="1.100"><path d="M1.500 5.500L5 2L8.500 5.500"/></svg>
   <svg width="11" height="11" stroke="#fff"><path d="M3.500 1.500H10.500V7.500H2.500M6.500 7.500V9.500M4 10H9M.5 1V4.500H3M1.500 4.500V7"/></svg>
   <span>英</span>
   <svg width="10" height="11" stroke="#fff"><path d="M1.500 1.500H9.500V9.500H1.500ZM3 3.500H8M3 5.500H8M3 7.500H8M0 3H2M0 6H2"/></svg>
   <div class="clock">下午 02:42<br>2023/8/7</div>
   <svg width="17" height="15" style="margin-left:12px"><path d="M1 1H12V9H5L3 11V9H1Z" fill="#fff"/><path d="M3 3.500H10M3 6H10" stroke="#1a2b3d"/><circle cx="11.500" cy="9.500" r="4.300" fill="#1d2a38" stroke="#8895a0" stroke-width=".8"/><text x="9.500" y="12.400" font-size="7.500" fill="#fff">2</text></svg>
  </div>
 </div>
</footer>

<div class="keys d-flex flex-column justify-content-between"><span>A</span><span>Left Mouse Button</span></div>
<div class="share d-flex align-items-center justify-content-between">
 <svg width="5" height="10" stroke="#bbb"><path d="M1 1V9M3.500 1V9"/></svg><span>Screencastify - Screen Video Recorder 正在共用你的畫面。</span><button class="btn btn-primary">停止共用</button><a href="#">隱藏</a>
</div>
</body>
</html>
